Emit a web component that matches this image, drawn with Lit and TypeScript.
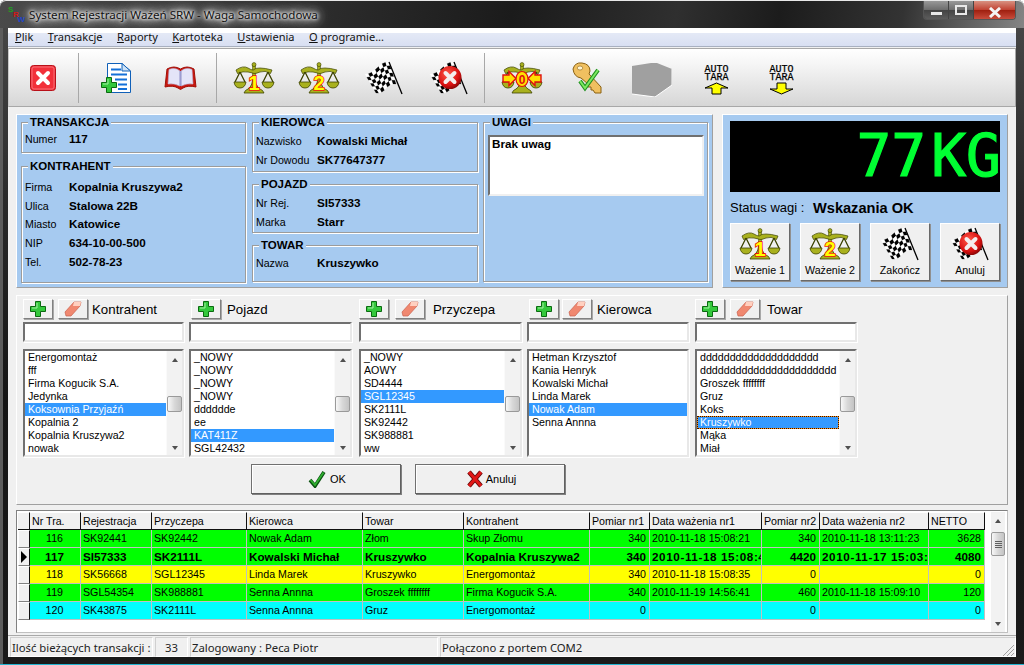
import { LitElement, css, html, svg } from "lit";
import { customElement } from "lit/decorators.js";

const OLIVE = "#a9b11e";
const DARK = "#3c4200";

const scaleBody = svg`
  <path d="M10 31Q11 28 14 27Q19 24 19 13h2q0 11 5 14Q29 28 30 31z" fill=${OLIVE} stroke=${DARK} stroke-width=".8"/>
  <rect x="18.500" y="3" width="3" height="12" fill=${OLIVE} stroke=${DARK} stroke-width=".5"/>
  <circle cx="20" cy="2.600" r="2" fill=${OLIVE} stroke=${DARK} stroke-width=".6"/>
  <path d="M2 8Q9 3 14 6T20 7.500T26 6T38 8L36.500 11.500Q31 8 26 10T20 11.500T14 10T3.500 11.500Z" fill=${OLIVE} stroke=${DARK} stroke-width=".7"/>
  <path d="M6 10L1 20M6 10L11 20M34 10L29 20M34 10L39 20" stroke=${DARK} stroke-width="1.300" fill="none"/>
  <path d="M0 20H12Q11 26 6 26T0 20ZM28 20H40Q39 26 34 26T28 20Z" fill=${OLIVE} stroke=${DARK} stroke-width=".8"/>
`;

function scaleIcon(digit: string) {
  return html`<svg class="ico" viewBox="0 0 40 32">
    ${scaleBody}
    <text x="20" y="28" class="digit">${digit}</text>
  </svg>`;
}

// scale with the two arrows closing on the zero
const zeroIcon = html`<svg class="ico" viewBox="0 0 40 32">
  ${scaleBody}
  <path d="M1 13H7V9.500L14 16.500L7 23.500V20H1Z" fill="#ffe000" stroke="#e01010" stroke-width="1.400"/>
  <path d="M39 13H33V9.500L26 16.500L33 23.500V20H39Z" fill="#ffe000" stroke="#e01010" stroke-width="1.400"/>
  <ellipse cx="20" cy="17" rx="6" ry="7.500" fill="#ffe000" stroke="#e01010" stroke-width="1.200"/>
  <text x="20" y="21.500" class="zero">0</text>
</svg>`;

function flagCells() {
  const nu = 7;
  const nv = 6;
  const at = (u: number, v: number) => {
    const wave = 1.8 * Math.sin(u * Math.PI * 2);
    const tx = 24 * u;
    const ty = 12 - 12 * u + wave;
    const bx = 11 + 20 * u;
    const by = 31 - 9 * u + wave;
    return `${(tx + (bx - tx) * v).toFixed(1)},${(ty + (by - ty) * v).toFixed(1)}`;
  };
  const cells = [];
  for (let i = 0; i < nu; i++) {
    for (let j = 0; j < nv; j++) {
      const pts = [at(i / nu, j / nv), at((i + 1) / nu, j / nv), at((i + 1) / nu, (j + 1) / nv), at(i / nu, (j + 1) / nv)];
      const fill = (i + j) % 2 ? "#000" : "#fff";
      cells.push(svg`<polygon points=${pts.join(" ")} fill=${fill} stroke=${fill} stroke-width=".2"/>`);
    }
  }
  return cells;
}

const flagBody = svg`
  ${flagCells()}
  <path d="M24 0L37 32" stroke="#000" stroke-width="1.300"/>
`;

const flagIcon = html`<svg class="ico" viewBox="-1 0 40 32">${flagBody}</svg>`;

const flagCancelIcon = html`<svg class="ico" viewBox="-1 0 40 32">
  <defs>
    <radialGradient id="redball" cx=".4" cy=".35" r=".7">
      <stop offset="0" stop-color="#ff5a4a"/>
      <stop offset=".7" stop-color="#d81010"/>
      <stop offset="1" stop-color="#7c0606"/>
    </radialGradient>
  </defs>
  ${flagBody}
  <circle cx="20" cy="15.500" r="11.500" fill="url(#redball)"/>
  <path d="M15.500 11L24.500 20M24.500 11L15.500 20" stroke="#f4eeee" stroke-width="4" stroke-linecap="round"/>
</svg>`;

const exitIcon = html`<svg width="26" height="26" viewBox="0 0 26 26">
  <rect x=".5" y=".5" width="25" height="25" rx="3" fill="#f2303a" stroke="#b81018"/>
  <rect x="2" y="2" width="22" height="22" rx="2" fill="none" stroke="#f87078"/>
  <path d="M8 8L18 18M18 8L8 18" stroke="#fff" stroke-width="4" stroke-linecap="round"/>
</svg>`;

const plusPath = svg`<path d="M5.500 .5H10.500V5.500H15.500V10.500H10.500V15.500H5.500V10.500H.5V5.500H5.500Z" fill="#34c83c" stroke="#0a6a10"/>
  <path d="M7 2V7H2" fill="none" stroke="#a0f0a0"/>`;

const docIcon = html`<svg width="30" height="30" viewBox="0 0 30 30">
  <path d="M6.500 .5H21L29.500 8V29.500H6.500Z" fill="#fff" stroke="#1060b8"/>
  <path d="M21 .5V8H29.500Z" fill="#cfe4f8" stroke="#1060b8"/>
  <path d="M10 6.500H20M10 11.500H26M14 16.500H26M17 21.500H26M17 26H26" stroke="#1470d8" stroke-width="2"/>
  <g transform="translate(0,14)">${plusPath}</g>
</svg>`;

const bookIcon = html`<svg width="33" height="24" viewBox="0 0 33 24">
  <path d="M1 21L3 3Q10 -1 16.500 3Q23 -1 30 3L32 21Q24 19 19 22L16.500 23.500L14 22Q9 19 1 21Z" fill="#c81810" stroke="#a01008"/>
  <path d="M4 18L5 3.500Q11 1 16 5V20Q10 17 4 18ZM29 18L28 3.500Q22 1 17 5V20Q23 17 29 18Z" fill="#e4e4f8" stroke="#b8b8dc" stroke-width=".6"/>
  <path d="M16.500 5V20" stroke="#9c9cd0" stroke-width="2"/>
</svg>`;

const keyIcon = html`<svg width="30" height="32" viewBox="0 0 30 32">
  <path d="M1 7Q3 0 10 1Q18 2 18 9L17 12L29 25V31H23L21 28L19 28L19 25L16 25L16 22L9 16Q2 15 1 7Z" fill="#f0c060" stroke="#8a6010"/>
  <ellipse cx="8" cy="6" rx="2.800" ry="2" fill="#fff4d0" stroke="#8a6010" stroke-width=".6"/>
  <path d="M8 19L13 26L26 8" fill="none" stroke="#209020" stroke-width="4"/>
  <path d="M8 19L13 26L26 8" fill="none" stroke="#7ce860" stroke-width="2"/>
</svg>`;

const blockIcon = html`<svg class="low" width="40" height="34" viewBox="0 0 40 34">
  <path d="M0 3L19 0H25L40 6V22L23 34L0 31Z" fill="#a0a0a0"/>
  <path d="M40 6V22L23 34L0 31" fill="none" stroke="#fff"/>
</svg>`;

function tareIcon(up: boolean) {
  const arrow = up ? "M12.500 24L24 29H17V35H8V29H1Z" : "M8 24H17V30H24L12.500 35L1 30H8Z";
  return html`<svg width="25" height="38" viewBox="0 0 25 38">
    <text x="12.500" y="13" class="tare">AUTO</text>
    <text x="12.500" y="21" class="tare">TARA</text>
    <path d=${arrow} fill="#ffff00" stroke="#000"/>
  </svg>`;
}

const plusIcon = html`<svg width="16" height="16" viewBox="0 0 16 16">${plusPath}</svg>`;

const eraserIcon = html`<svg width="18" height="16" viewBox="0 0 18 16">
  <path d="M1 11L10 1H17L16 5L7 15H2Z" fill="#f08870" stroke="#c8604c" stroke-width=".7"/>
  <path d="M10 1H17L16 5H9Z" fill="#ffd0c0"/>
</svg>`;

const checkIcon = html`<svg width="18" height="18" viewBox="0 0 18 18">
  <path d="M2 10L7 16L16 2" fill="none" stroke="#0a5010" stroke-width="3.600"/>
  <path d="M2.500 10L7 15L15.500 2.500" fill="none" stroke="#30b030" stroke-width="1.800"/>
</svg>`;

const crossIcon = html`<svg width="16" height="18" viewBox="0 0 16 18">
  <path d="M2 2L14 16M14 2L2 16" stroke="#600808" stroke-width="4.600"/>
  <path d="M2 2L14 16M14 2L2 16" stroke="#e01818" stroke-width="3"/>
</svg>`;

const appIcon = html`<svg width="17" height="18" viewBox="0 0 17 18">
  <text x="0" y="7" class="lg" fill="#20a020">S</text>
  <text x="5" y="12" class="lg" fill="#d01818">R</text>
  <text x="9.500" y="17" class="lg" fill="#1840c8">W</text>
</svg>`;

const grip = html`<svg width="11" height="11" viewBox="0 0 11 11">
  <path d="M0 11L11 0M4 11L11 4M8 11L11 8" stroke="#a0a0a0" fill="none"/>
</svg>`;

const GROUP_TWO = [docIcon, bookIcon];
const GROUP_THREE = [scaleIcon("1"), scaleIcon("2"), flagIcon, flagCancelIcon];
const GROUP_FOUR = [zeroIcon, keyIcon, blockIcon, tareIcon(true), tareIcon(false)];

const PICKERS = [
  {
    name: "Kontrahent", addGap: 0, eraseGap: 5, labelGap: 4, selected: 4, focused: false, scroll: true,
    items: ["Energomontaż", "fff", "Firma Kogucik S.A.", "Jedynka", "Koksownia Przyjaźń", "Kopalnia 2", "Kopalnia Kruszywa2", "nowak"],
  },
  {
    name: "Pojazd", addGap: 2, eraseGap: -1, labelGap: 6, selected: 6, focused: false, scroll: true,
    items: ["_NOWY", "_NOWY", "_NOWY", "_NOWY", "dddddde", "ee", "KAT411Z", "SGL42432"],
  },
  {
    name: "Przyczepa", addGap: 0, eraseGap: 6, labelGap: 8, selected: 3, focused: false, scroll: true,
    items: ["_NOWY", "AOWY", "SD4444", "SGL12345", "SK2111L", "SK92442", "SK988881", "ww"],
  },
  {
    name: "Kierowca", addGap: 2, eraseGap: 3, labelGap: 5, selected: 4, focused: false, scroll: false,
    items: ["Hetman Krzysztof", "Kania Henryk", "Kowalski Michał", "Linda Marek", "Nowak Adam", "Senna Annna"],
  },
  {
    name: "Towar", addGap: 0, eraseGap: 5, labelGap: 7, selected: 5, focused: true, scroll: true,
    items: ["dddddddddddddddddddd", "ddddddddddddddddddddddd", "Groszek ffffffff", "Gruz", "Koks", "Kruszywko", "Mąka", "Miał"],
  },
];

const HEADERS = ["Nr Tra.", "Rejestracja", "Przyczepa", "Kierowca", "Towar", "Kontrahent", "Pomiar nr1", "Data ważenia nr1", "Pomiar nr2", "Data ważenia nr2", "NETTO"];

const ROWS = [
  { tone: "green", bold: false, cells: ["116", "SK92441", "SK92442", "Nowak Adam", "Złom", "Skup Złomu", "340", "2010-11-18 15:08:21", "340", "2010-11-18 13:11:23", "3628"] },
  { tone: "green", bold: true, cells: ["117", "SI57333", "SK2111L", "Kowalski Michał", "Kruszywko", "Kopalnia Kruszywa2", "340", "2010-11-18 15:08:41", "4420", "2010-11-17 15:03:22", "4080"] },
  { tone: "yellow", bold: false, cells: ["118", "SK56668", "SGL12345", "Linda Marek", "Kruszywko", "Energomontaż", "340", "2010-11-18 15:08:35", "0", "", "0"] },
  { tone: "green", bold: false, cells: ["119", "SGL54354", "SK988881", "Senna Annna", "Groszek ffffffff", "Firma Kogucik S.A.", "340", "2010-11-19 14:56:41", "460", "2010-11-18 15:09:10", "120"] },
  { tone: "cyan", bold: false, cells: ["120", "SK43875", "SK2111L", "Senna Annna", "Gruz", "Energomontaż", "0", "", "0", "", "0"] },
];

// columns holding a number, the first one is centered
const RIGHT_COLS = [6, 8, 10];
const DATE_COLS = [7, 9];

@customElement("app-root")
export class AppRoot extends LitElement {
  static styles = css`
    :host {
      display: block;
      width: 1024px;
      height: 665px;
      overflow: hidden;
      font-family: "Liberation Sans", Arial, sans-serif;
      font-size: 10.67px;
      color: #000;
    }

    .window {
      box-sizing: border-box;
      width: 1024px;
      height: 665px;
      display: flex;
      flex-direction: column;
      padding: 0 8px 8px;
      background: linear-gradient(#4a4a4a, #2a2a2a 30%, #151515 60%, #1a1a1a);
      border-radius: 6px 6px 0 0;
      box-shadow: inset 0 1px 0 #e8e8e8, inset 0 -1px 0 #20b4d0, inset 3px 0 0 #5c5c5c;
    }

    /* title bar */
    .title {
      height: 28px;
      margin: 0 -8px;
      padding-left: 8px;
      display: flex;
      align-items: flex-start;
      border-radius: 6px 6px 0 0;
      background: linear-gradient(100deg, #4a4a4a 0, #2a2a2a 34%, #1b1b1b 50%, #2f2f2f 66%, #1c1c1c 76%, #333 88%, #858585 100%);
      box-shadow: inset 0 1px 0 #e8e8e8;
    }
    .title svg { margin-top: 5px; flex: none; }
    .lg { font: bold 8px "Liberation Sans", sans-serif; }
    .caption {
      margin: 8px 0 0 4px;
      font: 11.640px/14px "Noto Sans", sans-serif;
      color: #111;
      text-shadow: 0 0 3px #fff, 0 0 5px #fff, 0 0 8px #fff, 0 0 12px #ddd, 0 0 16px #bbb, 0 0 20px #aaa;
      white-space: nowrap;
    }
    .win-buttons {
      margin: 1px 8px 0 auto;
      display: flex;
      height: 18px;
      border: 1px solid #555;
      border-top: 0;
      border-radius: 0 0 4px 4px;
      overflow: hidden;
    }
    .wb {
      box-sizing: border-box;
      display: flex;
      align-items: center;
      justify-content: center;
      width: 25px;
      background: linear-gradient(#989898, #6c6c6c 50%, #444 52%, #5c5c5c);
      border-right: 1px solid #444;
    }
    .wb.close {
      width: 41px;
      border-right: 0;
      background: linear-gradient(#d89080, #c04030 50%, #a02010 52%, #c84c3c);
    }
    .wb .min { width: 11px; height: 3px; margin-top: 6px; background: #e8e8e8; }
    .wb .max { width: 8px; height: 6px; border: 2px solid #e8e8e8; }
    .wb svg { display: block; }

    /* client area */
    .client {
      flex: 1;
      display: flex;
      flex-direction: column;
      background: #f0f0f0;
      min-height: 0;
    }
    .menu {
      height: 18px;
      padding-left: 7px;
      display: flex;
      align-items: center;
      font: 11.050px/18px "Noto Sans", sans-serif;
      background: linear-gradient(#fff 25%, #e4e9f6 30%, #d8dff2);
      border-bottom: 1px solid #a8b0c0;
      color: #111;
    }
    .menu span { margin-right: 14.500px; white-space: nowrap; }
    .toolbar {
      box-sizing: border-box;
      height: 59px;
      margin-top: 1px;
      padding: 4px 0 0 1px;
      display: flex;
      border: 1px solid #a8a8a8;
      border-left-color: #c8c8c8;
      background: linear-gradient(#fff, #f4f4f4 30%, #d6d6d6);
    }
    .tool {
      width: 65px;
      height: 50px;
      display: flex;
      align-items: center;
      justify-content: center;
    }
    .low { margin-top: 4px; }
    .sep {
      width: 1px;
      height: 50px;
      margin: 0 4px 0 3px;
      background: #a8a8a8;
    }
    .ico { width: 40px; height: 32px; display: block; overflow: visible; }
    .digit {
      font: bold 20px "Liberation Sans", sans-serif;
      text-anchor: middle;
      fill: #ffff00;
      stroke: #f01010;
      stroke-width: 1.600;
      paint-order: stroke;
    }
    .zero {
      font: bold 12px "Liberation Sans", sans-serif;
      text-anchor: middle;
      fill: #e01010;
    }
    .tare {
      font: 10px "Liberation Mono", monospace;
      text-anchor: middle;
      fill: #000;
      stroke: #000;
      stroke-width: .25;
    }

    .body {
      flex: 1;
      min-height: 0;
      padding: 7px 8px 0;
      display: flex;
      flex-direction: column;
    }
    .top { display: flex; gap: 9px; height: 174px; }

    /* blue panels */
    .panel {
      box-sizing: border-box;
      background: #a6caf0;
      border: 1px solid;
      border-color: #fff #a0a0a0 #a0a0a0 #fff;
    }
    .info {
      width: 697px;
      padding: 7px 0 0 4px;
      display: flex;
      gap: 6px;
    }
    .stack { width: 225px; display: flex; flex-direction: column; }
    .stack.mid { width: 226px; margin-right: -1px; }
    .group {
      box-sizing: border-box;
      position: relative;
      border: 1px solid #9c9c9c;
      box-shadow: 1px 1px 0 #fff, inset 1px 1px 0 #fff;
      padding-left: 3px;
    }
    .legend {
      position: absolute;
      top: -8px;
      left: 6px;
      padding: 0 2px;
      background: #a6caf0;
      font: bold 11.500px/14px "Liberation Sans", sans-serif;
    }
    .kv { display: grid; line-height: 18.700px; white-space: nowrap; }
    .kv.short { grid-template-columns: 44px 1fr; }
    .kv.long { grid-template-columns: 61px 1fr; }
    .kv b { font-size: 11.700px; }
    .memo {
      box-sizing: border-box;
      height: 61px;
      margin: 12px 3px 0 1px;
      padding: 0 2px;
      background: #fff;
      border: 2px solid;
      border-color: #707070 #f0f0f0 #f0f0f0 #707070;
      font: bold 11.700px/14px "Liberation Sans", sans-serif;
    }

    .scale-panel {
      width: 286px;
      padding: 6px 7px 0;
    }
    .led {
      height: 71px;
      background: #000;
      color: #00ff33;
      text-align: right;
      overflow: hidden;
      font: 58px/71px "DejaVu Sans Mono", monospace;
      -webkit-text-stroke: 1.200px #00ff33;
      word-spacing: -30px;
      white-space: nowrap;
    }
    .led span { display: inline-block; margin-right: -1px; }
    .status {
      height: 31px;
      display: grid;
      grid-template-columns: 83px 1fr;
      align-items: center;
      font-size: 13px;
    }
    .status b { font-size: 14.600px; }
    .actions { display: flex; gap: 10px; }
    .action {
      box-sizing: border-box;
      width: 60px;
      height: 58px;
      padding-top: 4px;
      display: flex;
      flex-direction: column;
      align-items: center;
      background: #f0f0f0;
      border: 1px solid;
      border-color: #fff #696969 #696969 #fff;
      box-shadow: 1px 1px 0 #909090;
    }
    .action span { margin-top: 3px; line-height: 14px; white-space: nowrap; }

    /* pickers */
    .pickers {
      box-sizing: border-box;
      height: 210px;
      margin-top: 7px;
      padding: 3px 0 0 6px;
      border: 1px solid;
      border-color: #fff #a0a0a0 #a0a0a0 #fff;
    }
    .columns { display: flex; gap: 5px; }
    .column { width: 162px; }
    .column:nth-child(1) { width: 161px; }
    .column:nth-child(2), .column:nth-child(3) { width: 163px; }
    .column:nth-child(3) { margin-left: 2px; }
    .column:nth-child(5) { margin-left: 1px; }
    .head { height: 20px; display: flex; align-items: center; }
    .head label { font-size: 13.300px; white-space: nowrap; }
    .mini {
      box-sizing: border-box;
      width: 30px;
      height: 20px;
      display: flex;
      align-items: center;
      justify-content: center;
      flex: none;
      border: 1px solid;
      border-color: #fff #808080 #808080 #fff;
      box-shadow: 1px 1px 0 #a8a8a8;
      background: #f0f0f0;
    }
    .input, .list {
      box-sizing: border-box;
      background: #fff;
      border: 2px solid;
      border-color: #707070 #e8e8e8 #e8e8e8 #707070;
      box-shadow: 1px 1px 0 #fff;
    }
    .input { height: 20px; margin-top: 3px; }
    .list {
      height: 108px;
      margin-top: 7px;
      display: flex;
      overflow: hidden;
    }
    .items { flex: 1; min-width: 0; overflow: hidden; }
    .item {
      box-sizing: border-box;
      height: 13px;
      padding-left: 3px;
      line-height: 13px;
      white-space: nowrap;
      overflow: hidden;
    }
    .item.sel { background: #3399ff; color: #fff; }
    .item.focus {
      outline: 1px dotted #301000;
      outline-offset: -1px;
      box-shadow: inset 0 0 0 1px #ff9010;
    }

    .sb {
      flex: none;
      width: 15px;
      display: flex;
      flex-direction: column;
      background: #f2f2f2;
      border-left: 1px solid #fafafa;
    }
    .arrow { height: 18px; display: flex; align-items: center; justify-content: center; }
    .arrow.down { height: 14px; margin-top: auto; }
    .arrow i { width: 0; height: 0; border: 3.500px solid transparent; }
    .arrow.up i { border-bottom: 4px solid #505050; border-top: 0; }
    .arrow.down i { border-top: 4px solid #505050; border-bottom: 0; }
    .thumb {
      box-sizing: border-box;
      height: 16px;
      margin-top: 27px;
      border: 1px solid #9a9a9a;
      border-radius: 2px;
      background: linear-gradient(90deg, #f8f8f8, #d8d8d8 50%, #c4c4c4);
    }

    .confirm { display: flex; gap: 14px; margin: 7px 0 0 228px; }
    .big {
      box-sizing: border-box;
      width: 150px;
      height: 30px;
      padding-left: 2px;
      display: flex;
      align-items: center;
      justify-content: center;
      gap: 4px;
      background: #f0f0f0;
      border: 1px solid;
      border-color: #707070 #606060 #606060 #707070;
      box-shadow: inset 1px 1px 0 #fff, 1px 1px 0 #808080;
      font-size: 11px;
    }
    .big:last-child { padding-left: 3px; gap: 3px; }

    /* transaction grid */
    .grid {
      box-sizing: border-box;
      height: 123px;
      margin-top: 5px;
      padding: 1px 2px 0 1px;
      display: flex;
      background: #fff;
      border: 1px solid;
      border-color: #808080 #c0c0c0 #c0c0c0 #808080;
    }
    .table { width: 967px; flex: none; }
    .row {
      display: grid;
      grid-template-columns: 12px 51px 71px 95px 116px 101px 126px 60px 112px 58px 109px 56px;
      height: 18px;
    }
    .row.hd { background: #f0f0f0; }
    .row.hd > div {
      box-sizing: border-box;
      padding-left: 2px;
      line-height: 17px;
      border-top: 1px solid #fff;
      border-right: 1px solid #101010;
      border-bottom: 1px solid #101010;
      white-space: nowrap;
      overflow: hidden;
    }
    .row.green { background: #00ff00; }
    .row.yellow { background: #ffff00; }
    .row.cyan { background: #00ffff; }
    .row.strong { font-weight: bold; font-size: 11.700px; }
    .cell {
      box-sizing: border-box;
      padding: 0 3px 0 2px;
      line-height: 17px;
      border-right: 1px solid #c0c0c0;
      border-bottom: 1px solid #c0c0c0;
      white-space: nowrap;
      overflow: hidden;
    }
    .cell.r { text-align: right; }
    .cell.c { text-align: center; }
    .row.strong .cell.d { letter-spacing: .6px; padding-right: 0; }
    .row > .mark {
      box-sizing: border-box;
      padding: 0;
      display: flex;
      align-items: center;
      justify-content: center;
      background: #f0f0f0;
      border-top: 1px solid #fff;
      border-left: 1px solid #fff;
      border-right: 1px solid #101010;
      border-bottom: 1px solid #808080;
    }
    .mark i {
      width: 0;
      height: 0;
      border-left: 6px solid #000;
      border-top: 6px solid transparent;
      border-bottom: 6px solid transparent;
    }
    .sb.tall { width: 14px; margin-left: 6px; border-left: 0; }
    .sb.tall .arrow { height: 17px; }
    .sb.tall .thumb {
      height: 24px;
      margin-top: 3px;
      display: flex;
      flex-direction: column;
      align-items: center;
      justify-content: center;
      gap: 1px;
    }
    .thumb b { display: block; width: 7px; height: 1px; background: #606060; }

    /* status bar */
    .bar {
      height: 22px;
      margin: 2px -8px 0;
      padding: 1px 0 0 2px;
      display: flex;
      gap: 2px;
      box-sizing: border-box;
      border-top: 1px solid #a8a8a8;
      font: 11.300px/19px "Noto Sans", sans-serif;
      color: #222;
    }
    .stat {
      box-sizing: border-box;
      height: 20px;
      padding: 0 1px;
      border: 1px solid;
      border-color: #d0d0d0 #fff #fff #d0d0d0;
      white-space: nowrap;
      overflow: hidden;
    }
    .stat.count { width: 143px; flex: none; }
    .stat.num { width: 33px; text-align: center; }
    .stat.user { width: 248px; }
    .stat.port { flex: 1; display: flex; justify-content: space-between; align-items: flex-end; }
    .stat.port span { align-self: flex-start; }
  `;

  tool(icon: unknown) {
    return html`<div class="tool">${icon}</div>`;
  }

  group(title: string, height: number, gap: number, cls: string, pad: number, rows: string[][]) {
    return html`
      <div class="group" style="height:${height}px;margin-top:${gap}px;padding-top:${pad}px">
        <span class="legend">${title}</span>
        <div class="kv ${cls}">
          ${rows.map(([k, v]) => html`<span>${k}</span><b>${v}</b>`)}
        </div>
      </div>
    `;
  }

  picker(p: (typeof PICKERS)[number]) {
    return html`
      <div class="column">
        <div class="head">
          <div class="mini" style="margin-left:${p.addGap}px">${plusIcon}</div>
          ${p.eraseGap >= 0
            ? html`<div class="mini" style="margin-left:${p.eraseGap}px">${eraserIcon}</div>`
            : ""}
          <label style="margin-left:${p.labelGap}px">${p.name}</label>
        </div>
        <div class="input"></div>
        <div class="list">
          <div class="items">
            ${p.items.map(
              (item, i) => html`<div class="item ${i === p.selected ? "sel" : ""} ${i === p.selected && p.focused ? "focus" : ""}">${item}</div>`,
            )}
          </div>
          ${p.scroll
            ? html`<div class="sb">
                <div class="arrow up"><i></i></div>
                <div class="thumb"></div>
                <div class="arrow down"><i></i></div>
              </div>`
            : ""}
        </div>
      </div>
    `;
  }

  row(r: (typeof ROWS)[number]) {
    return html`
      <div class="row ${r.tone} ${r.bold ? "strong" : ""}">
        <div class="mark">${r.bold ? html`<i></i>` : ""}</div>
        ${r.cells.map((c, i) => {
          const align = i === 0 ? "c" : RIGHT_COLS.includes(i) ? "r" : DATE_COLS.includes(i) ? "d" : "";
          return html`<div class="cell ${align}">${c}</div>`;
        })}
      </div>
    `;
  }

  render() {
    return html`
      <div class="window">
        <div class="title">
          ${appIcon}
          <span class="caption">System Rejestracji Ważeń SRW - Waga Samochodowa</span>
          <div class="win-buttons">
            <div class="wb"><div class="min"></div></div>
            <div class="wb"><div class="max"></div></div>
            <div class="wb close">
              <svg width="14" height="11" viewBox="0 0 14 11"><path d="M2 1L12 10M12 1L2 10" stroke="#f4f4f4" stroke-width="3"/></svg>
            </div>
          </div>
        </div>

        <div class="client">
          <div class="menu">
            <span><u>P</u>lik</span>
            <span><u>T</u>ransakcje</span>
            <span><u>R</u>aporty</span>
            <span><u>K</u>artoteka</span>
            <span><u>U</u>stawienia</span>
            <span><u>O</u> programie...</span>
          </div>

          <div class="toolbar">
            ${this.tool(exitIcon)}
            <div class="sep"></div>
            ${GROUP_TWO.map((i) => this.tool(i))}
            <div class="sep"></div>
            ${GROUP_THREE.map((i) => this.tool(i))}
            <div class="sep"></div>
            ${GROUP_FOUR.map((i) => this.tool(i))}
          </div>

          <div class="body">
            <div class="top">
              <div class="panel info">
                <div class="stack">
                  ${this.group("TRANSAKCJA", 31, 0, "short", 7, [["Numer", "117"]])}
                  ${this.group("KONTRAHENT", 117, 13, "short", 11, [
                    ["Firma", "Kopalnia Kruszywa2"],
                    ["Ulica", "Stalowa 22B"],
                    ["Miasto", "Katowice"],
                    ["NIP", "634-10-00-500"],
                    ["Tel.", "502-78-23"],
                  ])}
                </div>
                <div class="stack mid">
                  ${this.group("KIEROWCA", 50, 0, "long", 9, [["Nazwisko", "Kowalski Michał"], ["Nr Dowodu", "SK77647377"]])}
                  ${this.group("POJAZD", 49, 12, "long", 9, [["Nr Rej.", "SI57333"], ["Marka", "Starr"]])}
                  ${this.group("TOWAR", 37, 12, "long", 8, [["Nazwa", "Kruszywko"]])}
                </div>
                <div class="stack">
                  <div class="group" style="height:160px">
                    <span class="legend">UWAGI</span>
                    <div class="memo">Brak uwag</div>
                  </div>
                </div>
              </div>

              <div class="panel scale-panel">
                <div class="led"><span>77 KG</span></div>
                <div class="status"><span>Status wagi :</span><b>Wskazania OK</b></div>
                <div class="actions">
                  <div class="action">${scaleIcon("1")}<span>Ważenie 1</span></div>
                  <div class="action">${scaleIcon("2")}<span>Ważenie 2</span></div>
                  <div class="action">${flagIcon}<span>Zakończ</span></div>
                  <div class="action">${flagCancelIcon}<span>Anuluj</span></div>
                </div>
              </div>
            </div>

            <div class="pickers">
              <div class="columns">${PICKERS.map((p) => this.picker(p))}</div>
              <div class="confirm">
                <div class="big">${checkIcon}<span>OK</span></div>
                <div class="big">${crossIcon}<span>Anuluj</span></div>
              </div>
            </div>

            <div class="grid">
              <div class="table">
                <div class="row hd">
                  <div></div>
                  ${HEADERS.map((h) => html`<div>${h}</div>`)}
                </div>
                ${ROWS.map((r) => this.row(r))}
              </div>
              <div class="sb tall">
                <div class="arrow up"><i></i></div>
                <div class="thumb"><b></b><b></b><b></b><b></b></div>
                <div class="arrow down"><i></i></div>
              </div>
            </div>

            <div class="bar">
              <div class="stat count">Ilość bieżących transakcji :</div>
              <div class="stat num">33</div>
              <div class="stat user">Zalogowany : Peca Piotr</div>
              <div class="stat port"><span>Połączono z portem COM2</span>${grip}</div>
            </div>
          </div>
        </div>
      </div>
    `;
  }
}
